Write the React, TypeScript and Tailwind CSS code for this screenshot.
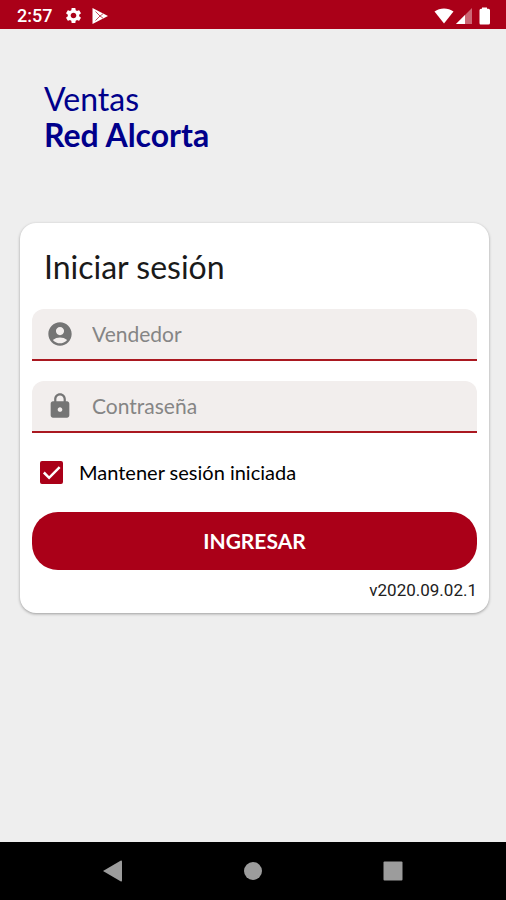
import { useState } from "react";
import type { ReactNode } from "react";
import { MdAccountCircle, MdLock, MdSettings } from "react-icons/md";

export default function App() {
  return (
    <div className="flex min-h-screen flex-col bg-[#eeeeee] font-['Lato',sans-serif]">
      <StatusBar />
      <main className="flex-1 pr-[17px] pb-10 pl-5">
        <h1 className="px-6 pt-13 text-[32px] leading-9 text-[#00008b]">
          Ventas
          <strong className="block font-bold">Red Alcorta</strong>
        </h1>
        <LoginCard />
      </main>
      <NavigationBar />
    </div>
  );
}

function StatusBar() {
  return (
    <header className="flex h-[29px] items-center bg-[#aa0018] pt-0.5 pr-3 pl-[17px] text-white">
      <span className="font-['Roboto',sans-serif] text-lg font-medium">2:57</span>
      <MdSettings className="ml-3 h-[19px] w-[19px]" />
      <svg viewBox="0 0 18 18" className="ml-2 h-[18px] w-[18px]" aria-hidden="true">
        <path d="M1.500 1 17 9 1.500 17Z" fill="#fff" />
        <path d="M4.500 4.500 9 9 4.500 13.500M9 9l3-2.200M9 9l3 2.200" fill="none" stroke="#aa0018" strokeWidth="0.700" />
      </svg>
      <div className="ml-auto flex items-center">
        <svg viewBox="0 0 20 16" className="h-4 w-5" aria-hidden="true">
          <path d="M.5 3.600C6-.6 14-.6 19.500 3.600L10 15.500Z" fill="#fff" />
        </svg>
        <svg viewBox="0 0 16 16" className="ml-0.5 h-4 w-4" aria-hidden="true">
          <path d="M0 16 16 0V16Z" fill="#fff" opacity="0.4" />
          <path d="M0 16 9 7V16Z" fill="#fff" />
        </svg>
        <svg viewBox="0 0 18 18" className="ml-1 h-[18px] w-[18px]" aria-hidden="true">
          <path d="M6 1.800V.5h5V1.800h1.500Q14 1.800 14 3.300V16Q14 17.500 12.500 17.500h-8Q3.500 17.500 3.500 16V3.300Q3.500 1.800 5 1.800Z" fill="#fff" />
        </svg>
      </div>
    </header>
  );
}

function LoginCard() {
  const [remember, setRemember] = useState(true);

  return (
    <form
      onSubmit={(e) => e.preventDefault()}
      className="mt-[70px] rounded-2xl bg-white px-3 pt-6 pb-[11px] shadow-[0_1px_3px_rgba(0,0,0,0.35)]"
    >
      <h2 className="px-3 text-[32px] leading-10 text-[#1a1a1a]">Iniciar sesión</h2>

      <div className="mt-[22px] grid gap-5">
        <Field
          label="Vendedor"
          type="text"
          icon={<MdAccountCircle className="h-7 w-7" />}
        />
        <Field
          label="Contraseña"
          type="password"
          icon={<MdLock className="h-7 w-7" />}
        />
      </div>

      <label className="mt-[23px] flex items-center gap-4 px-2 text-xl leading-8 text-black">
        <span className="relative h-[23px] w-[23px]">
          <input
            type="checkbox"
            checked={remember}
            onChange={(e) => setRemember(e.target.checked)}
            className="peer block h-[23px] w-[23px] appearance-none rounded-xs border-2 border-[#757575] checked:border-[#aa0018] checked:bg-[#aa0018]"
          />
          <svg
            viewBox="0 0 24 24"
            className="pointer-events-none absolute inset-0 hidden h-[23px] w-[23px] peer-checked:block"
            aria-hidden="true"
          >
            <path d="m4 12 5.500 5.500L20.500 6.500" fill="none" stroke="#fff" strokeWidth="2.600" />
          </svg>
        </span>
        Mantener sesión iniciada
      </label>

      <button
        type="submit"
        className="mt-6 block h-[58px] w-full rounded-[26px] bg-[#aa0018] text-[21px] font-bold text-white"
      >
        INGRESAR
      </button>
      <p className="mt-2 text-right font-['Roboto',sans-serif] text-[17px] leading-6 text-[#212121]">
        v2020.09.02.1
      </p>
    </form>
  );
}

function Field({
  label,
  type,
  icon,
}: {
  label: string;
  type: string;
  icon: ReactNode;
}) {
  return (
    <label className="flex h-[52px] items-center gap-[18px] rounded-t-xl border-b-2 border-[#aa1820] bg-[#f2eeed] px-3.5 text-[#757575]">
      {icon}
      <input
        type={type}
        aria-label={label}
        placeholder={label}
        className="min-w-0 flex-1 bg-transparent text-[21px] outline-none placeholder:text-[#858585]"
      />
    </label>
  );
}

function NavigationBar() {
  return (
    <nav className="flex h-[58px] items-center justify-center gap-[120px] bg-black text-[#9c9c9c]">
      <button type="button" aria-label="Atrás">
        <svg viewBox="0 0 20 22" className="h-[22px] w-5" fill="currentColor">
          <path d="M0 11 17.500 .8Q19 0 19 1.500V20.500Q19 22 17.500 21.200Z" />
        </svg>
      </button>
      <button type="button" aria-label="Inicio">
        <svg viewBox="0 0 20 20" className="h-5 w-5" fill="currentColor">
          <circle cx="10" cy="10" r="9" />
        </svg>
      </button>
      <button type="button" aria-label="Recientes">
        <svg viewBox="0 0 20 20" className="h-5 w-5" fill="currentColor">
          <rect x="0.500" y="0.500" width="19" height="19" rx="1" />
        </svg>
      </button>
    </nav>
  );
}
